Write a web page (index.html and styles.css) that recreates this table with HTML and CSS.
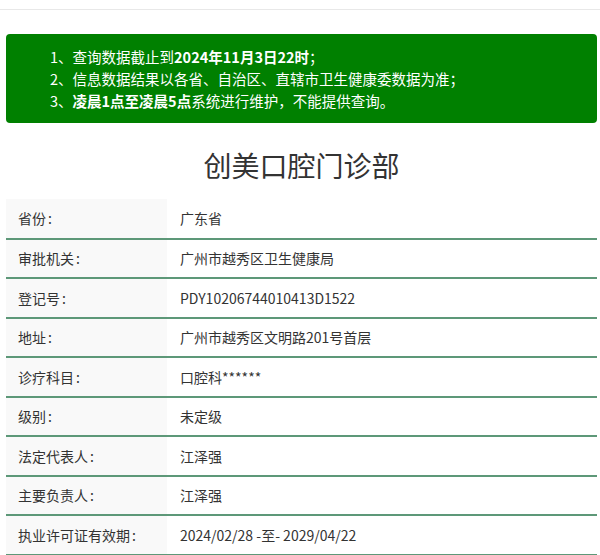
FILE: index.html
```html
<!DOCTYPE html>
<html lang="zh-CN">
<head>
<meta charset="utf-8">
<title>创美口腔门诊部</title>
<link rel="stylesheet" href="styles.css">
</head>
<body>
<div class="topbar"></div>
<div class="page">
  <div class="notice">
    <p>1、查询数据截止到<b>2024年11月3日22时</b>；</p>
    <p>2、信息数据结果以各省、自治区、直辖市卫生健康委数据为准；</p>
    <p>3、<b>凌晨1点至凌晨5点</b>系统进行维护，不能提供查询。</p>
  </div>
  <h1 class="title">创美口腔门诊部</h1>
  <table class="info">
    <tr><th>省份<span class="colon">:</span></th><td>广东省</td></tr>
    <tr><th>审批机关<span class="colon">:</span></th><td>广州市越秀区卫生健康局</td></tr>
    <tr><th>登记号<span class="colon">:</span></th><td>PDY10206744010413D1522</td></tr>
    <tr><th>地址<span class="colon">:</span></th><td>广州市越秀区文明路201号首层</td></tr>
    <tr><th>诊疗科目<span class="colon">:</span></th><td>口腔科******</td></tr>
    <tr><th>级别<span class="colon">:</span></th><td>未定级</td></tr>
    <tr><th>法定代表人<span class="colon">:</span></th><td>江泽强</td></tr>
    <tr><th>主要负责人<span class="colon">:</span></th><td>江泽强</td></tr>
    <tr><th>执业许可证有效期<span class="colon">:</span></th><td>2024/02/28 -至- 2029/04/22</td></tr>
  </table>
</div>
</body>
</html>
```
FILE: styles.css
```css
html, body {
  margin: 0;
  padding: 0;
  background: #fff;
}
body {
  font-family: "Noto Sans CJK SC", "Noto Sans", sans-serif;
  font-size: 14px;
  color: #333;
}
.topbar {
  height: 9px;
  border-bottom: 1px solid #e8e8e8;
}
.page {
  margin: 24px 3px 0 6px;
}
.notice {
  background: #008000;
  color: #fff;
  border-radius: 4px;
  padding: 12px 10px 11px 44px;
  font-size: 14.5px;
}
.notice p {
  margin: 0;
  line-height: 22px;
}
.notice b {
  font-weight: 700;
}
.title {
  margin: 0;
  padding: 32px 0 0;
  height: 44px;
  text-align: center;
  font-size: 28px;
  font-weight: 400;
  line-height: 20px;
  color: #333;
}
.info {
  width: 100%;
  border-collapse: collapse;
}
.info th, .info td {
  height: 39.5px;
  padding: 0 12px;
  text-align: left;
  font-weight: 400;
  border-bottom: 2px solid #5d9878;
  box-sizing: border-box;
  line-height: 20px;
}
.info th {
  width: 161px;
  background: #f9f9f9;
}
.info td {
  padding-left: 13px;
}
.colon {
  margin-left: 2px;
}
```
